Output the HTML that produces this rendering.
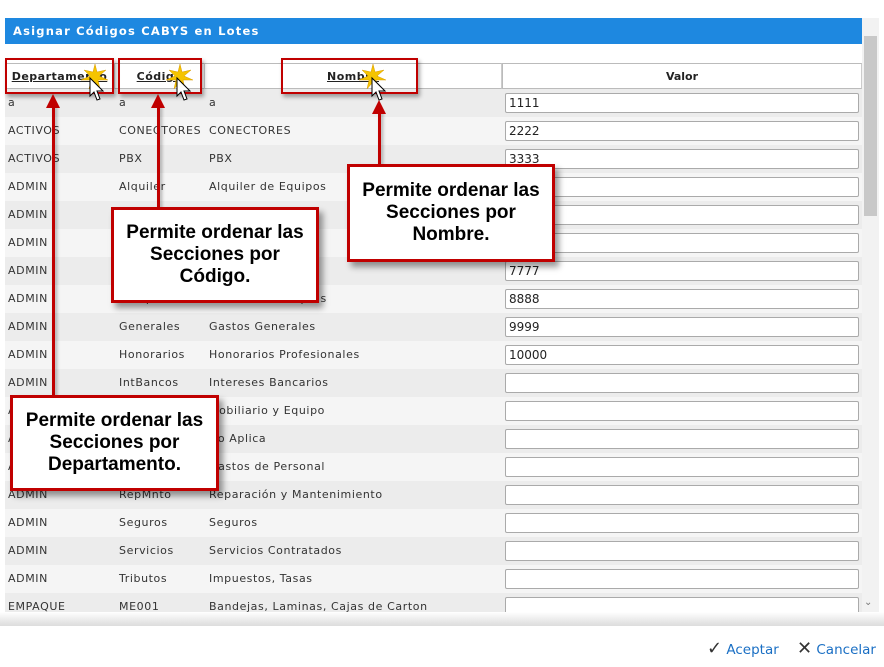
<!DOCTYPE html>
<html><head><meta charset="utf-8"><style>
body{margin:0;width:884px;height:667px;background:#fff;position:relative;overflow:hidden;font-family:"DejaVu Sans","Liberation Sans",sans-serif;}
.title{position:absolute;left:5px;top:18px;width:857px;height:26px;background:#1e88e0;color:#fff;font-weight:bold;font-size:11.5px;letter-spacing:1.2px;line-height:27px;padding-left:8px;box-sizing:border-box;}
.hdr{position:absolute;top:63px;height:26px;border-top:1px solid #bbb;border-bottom:1px solid #bbb;border-right:1px solid #ccc;box-sizing:border-box;font-size:11px;font-weight:bold;color:#222;text-align:center;line-height:25px;}
.hdr u{letter-spacing:.5px}
.row{position:absolute;left:5px;width:857px;height:28px;font-size:11px;letter-spacing:.6px;color:#333;line-height:28px;}
.row span{position:absolute;top:0}
.row i{position:absolute;left:500px;top:4px;width:354px;height:20px;box-sizing:border-box;border:1px solid #aaa;border-radius:2px;background:#fff;font-style:normal;line-height:18px;padding-left:3px;font-size:12px;letter-spacing:0;color:#222}
.sb{position:absolute;left:862px;top:18px;width:17px;height:594px;background:#f2f2f2}
.thumb{position:absolute;left:864px;top:36px;width:13px;height:180px;background:#c8c8c8}
.foot{position:absolute;left:0;top:612px;width:884px;height:14px;background:linear-gradient(#fff,#e6e6e6 70%,#ddd);}
.btn{position:absolute;top:638px;font-size:13.5px;color:#1a6fc4;font-family:"DejaVu Sans",sans-serif}
.hl{position:absolute;border:2px solid #c00000;box-shadow:2px 3px 4px rgba(0,0,0,.35)}
.call{position:absolute;background:#fff;border:3px solid #c00000;box-shadow:4px 5px 6px rgba(0,0,0,.4);font-family:"Liberation Sans",sans-serif;font-weight:bold;font-size:19px;line-height:22px;text-align:center;color:#000;box-sizing:border-box;display:flex;align-items:center;justify-content:center}
.ln{position:absolute;width:3px;background:#c00000;box-shadow:2px 2px 3px rgba(0,0,0,.3)}
.ah{position:absolute;width:0;height:0;border-left:7px solid transparent;border-right:7px solid transparent;border-bottom:14px solid #c00000}
</style></head><body>
<div class="title">Asignar Códigos CABYS en Lotes</div>
<div class="hdr" style="left:5px;width:110px;"><u>Departamento</u></div>
<div class="hdr" style="left:115px;width:90px;"><u>Código</u></div>
<div class="hdr" style="left:205px;width:297px;"><u>Nombre</u></div>
<div class="hdr" style="left:502px;width:360px;border-left:1px solid #bbb">Valor</div>
<div class="sb"></div><div class="thumb"></div>
<div style="position:absolute;left:864px;top:597px;font-size:10px;color:#777">⌄</div>
<div id="rows"></div>
<script>
var d=[["a","a","a","1111"],["ACTIVOS","CONECTORES","CONECTORES","2222"],["ACTIVOS","PBX","PBX","3333"],["ADMIN","Alquiler","Alquiler de Equipos","4444"],["ADMIN","GastosB","Gastos Bancarios","5555"],["ADMIN","Fotografia","Fotografias","6666"],["ADMIN","Gastos","Gastos","7777"],["ADMIN","Compras","Gastos de Compras","8888"],["ADMIN","Generales","Gastos Generales","9999"],["ADMIN","Honorarios","Honorarios Profesionales","10000"],["ADMIN","IntBancos","Intereses Bancarios",""],["ADMIN","Mobiliario","Mobiliario y Equipo",""],["ADMIN","NoAplica","No Aplica",""],["ADMIN","Personal","Gastos de Personal",""],["ADMIN","RepMnto","Reparación y Mantenimiento",""],["ADMIN","Seguros","Seguros",""],["ADMIN","Servicios","Servicios Contratados",""],["ADMIN","Tributos","Impuestos, Tasas",""],["EMPAQUE","ME001","Bandejas, Laminas, Cajas de Carton",""]];
var h="";d.forEach(function(r,k){var t=89+28*k;var hh=t+28>612?612-t:28;h+='<div class="row" style="top:'+t+'px;height:'+hh+'px;overflow:hidden;background:'+(k%2?'#f5f5f5':'#ececec')+'"><span style="left:3px">'+r[0]+'</span><span style="left:114px">'+r[1]+'</span><span style="left:204px">'+r[2]+'</span><i>'+r[3]+'</i></div>';});
document.getElementById("rows").innerHTML=h;
</script>
<div class="foot"></div>
<div class="btn" style="left:707px"><span style="color:#333;font-size:18px">✓</span> Aceptar</div>
<div class="btn" style="left:797px"><span style="color:#333;font-size:18px">✕</span> Cancelar</div>
<div class="hl" style="left:5px;top:58px;width:105px;height:32px"></div>
<div class="hl" style="left:118px;top:58px;width:80px;height:32px"></div>
<div class="hl" style="left:281px;top:58px;width:133px;height:32px"></div>
<svg style="position:absolute;left:0;top:0" width="884" height="120">
<g fill="#f5c400" stroke="#d99a00" stroke-width=".5">
<polygon points="95,64 97,72 106,70 99,76 108,80 98,80 100,89 95,82 89,89 91,80 81,80 90,76 84,70 93,72"/>
<polygon points="180,64 182,72 191,70 184,76 193,80 183,80 185,89 180,82 174,89 176,80 166,80 175,76 169,70 178,72"/>
<polygon points="373,64 375,72 384,70 377,76 386,80 376,80 378,89 373,82 367,89 369,80 359,80 368,76 362,70 371,72"/>
</g>
<g fill="#fff" stroke="#000" stroke-width="1">
<path d="M90,78 L90,96 L94,92 L97,100 L100,99 L97,91 L103,91 Z"/>
<path d="M177,78 L177,96 L181,92 L184,100 L187,99 L184,91 L190,91 Z"/>
<path d="M372,78 L372,96 L376,92 L379,100 L382,99 L379,91 L385,91 Z"/>
</g></svg>
<div class="ln" style="left:52px;top:104px;height:292px"></div><div class="ah" style="left:46px;top:94px"></div>
<div class="ln" style="left:157px;top:104px;height:104px"></div><div class="ah" style="left:151px;top:94px"></div>
<div class="ln" style="left:378px;top:110px;height:55px"></div><div class="ah" style="left:372px;top:100px"></div>
<div class="call" style="left:111px;top:207px;width:208px;height:96px">Permite ordenar las<br>Secciones por<br>Código.</div>
<div class="call" style="left:347px;top:164px;width:208px;height:98px">Permite ordenar las<br>Secciones por<br>Nombre.</div>
<div class="call" style="left:10px;top:395px;width:209px;height:96px">Permite ordenar las<br>Secciones por<br>Departamento.</div>
</body></html>
